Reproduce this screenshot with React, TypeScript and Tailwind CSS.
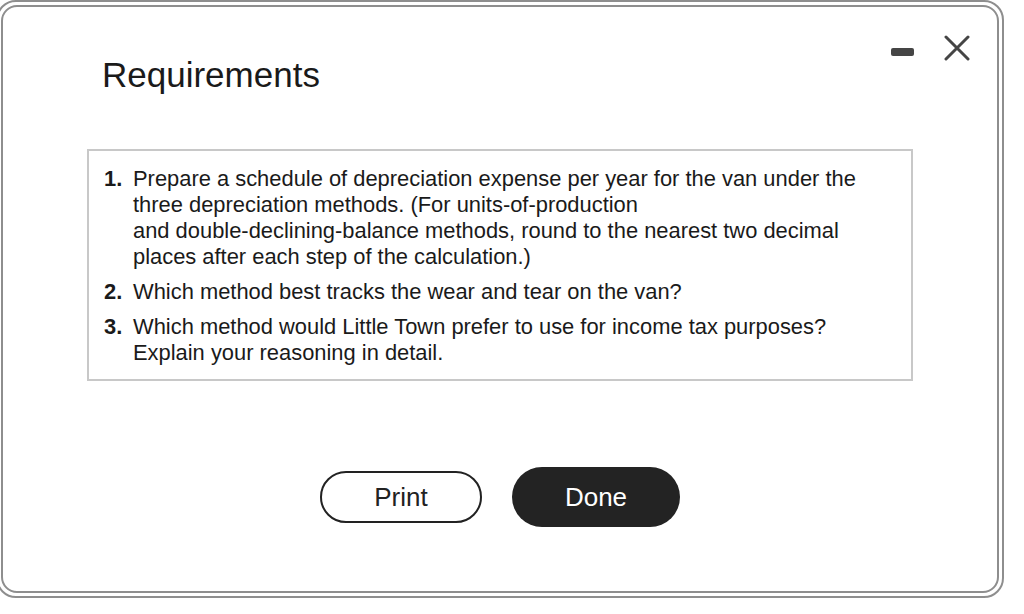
import React from "react";

const items: { n: string; lines: string[] }[] = [
  {
    n: "1.",
    lines: [
      "Prepare a schedule of depreciation expense per year for the van under the",
      "three depreciation methods. (For units-of-production",
      "and double-declining-balance methods, round to the nearest two decimal",
      "places after each step of the calculation.)",
    ],
  },
  { n: "2.", lines: ["Which method best tracks the wear and tear on the van?"] },
  {
    n: "3.",
    lines: [
      "Which method would Little Town prefer to use for income tax purposes?",
      "Explain your reasoning in detail.",
    ],
  },
];

export default function App() {
  return (
    <div
      className="w-[1024px] h-[614px] bg-white overflow-hidden text-[#1a1a1a]"
      style={{ fontFamily: '"Liberation Sans", Arial, Helvetica, sans-serif' }}
    >
      <div className="ml-[-4px] w-[1008px] h-[598px] border-2 border-[#8e8e8e] rounded-[20px] p-[3px]">
        <div className="h-full border-2 border-[#8e8e8e] rounded-[16px] flex flex-col">
          <div className="flex items-start">
            <h1 className="ml-[99px] mt-[48px] text-[35px] leading-[40px] font-normal">
              Requirements
            </h1>
            <div className="ml-auto mr-[27px] mt-[28px] flex items-start gap-[30px]">
              <div className="mt-[13px] w-[23px] h-[8px] rounded-[2px] bg-[#454545]" />
              <svg width="26" height="26" viewBox="0 0 26 26" className="block">
                <path d="M2 2 L24 24 M24 2 L2 24" stroke="#454545" strokeWidth="3" strokeLinecap="round" />
              </svg>
            </div>
          </div>
          <div className="ml-[84px] mt-[54px] w-[826px] border-2 border-[#c8c8c8] pt-[15px] pb-[13px] pl-[15px] pr-[10px] flex flex-col gap-[9px]">
            {items.map((it) => (
              <div key={it.n} className="flex text-[21.9px] leading-[26px]">
                <span className="w-[29px] shrink-0 font-bold">{it.n}</span>
                <div>
                  {it.lines.map((l, i) => (
                    <div key={i} className="whitespace-nowrap">{l}</div>
                  ))}
                </div>
              </div>
            ))}
          </div>
          <div className="mt-[86px] flex items-center justify-center gap-[30px]">
            <button className="w-[162px] h-[52px] rounded-full border-2 border-[#222] bg-white text-[26px] text-[#222]">
              Print
            </button>
            <button className="w-[168px] h-[60px] rounded-full bg-[#232323] text-[26px] text-white">
              Done
            </button>
          </div>
        </div>
      </div>
    </div>
  );
}
